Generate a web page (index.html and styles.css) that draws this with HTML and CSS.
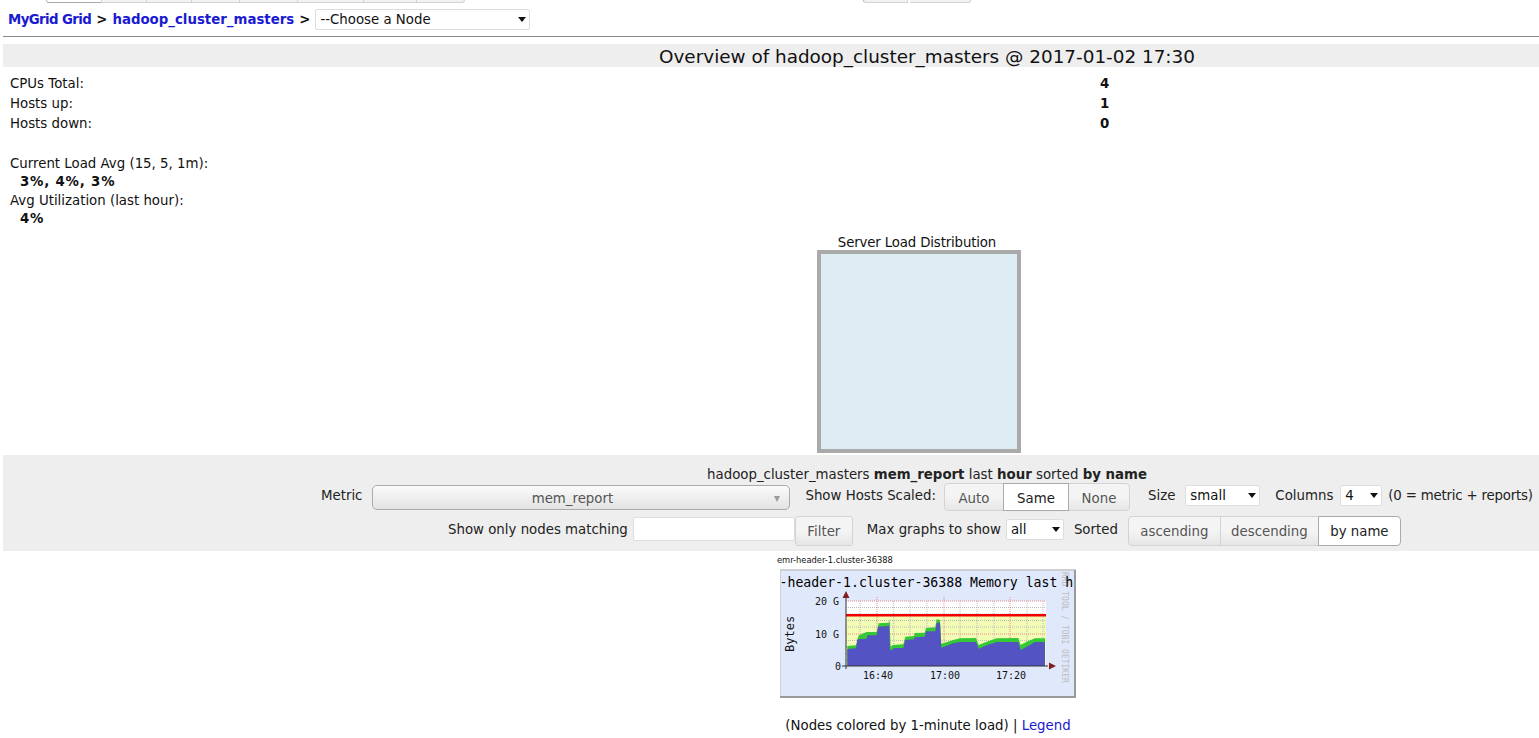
FILE: index.html
```html
<!DOCTYPE html>
<html lang="en">

<head>
    <meta charset="UTF-8">
    <meta name="viewport" content="width=device-width, initial-scale=1.0">
    <title>MyGrid Grid Report</title>
    <link rel="stylesheet" href="styles.css">
</head>

<body>
    <div class="tabstrip">
        <div class="tabs tabs-left">
            <a class="tab tab-on tab-first"></a>
            <a class="tab t45"></a>
            <a class="tab t45"></a>
            <a class="tab t48"></a>
            <a class="tab t58"></a>
            <a class="tab t66"></a>
            <a class="tab t53"></a>
            <a class="tab t48 tab-last"></a>
        </div>
        <div class="tabs tabs-right">
            <a class="tab t44 tab-first"></a>
            <a class="tab t61 tab-last"></a>
        </div>
    </div>

    <div class="crumbs">
        <a class="crumb-root" href="#">MyGrid Grid</a> <b>&gt;</b> <a href="#">hadoop_cluster_masters</a> <b>&gt;</b>
        <span class="sel sel-node">
            <select>
                <option>--Choose a Node</option>
            </select>
        </span>
    </div>
    <hr class="rule">

    <div class="page">
        <h1 class="overview">Overview of hadoop_cluster_masters @ 2017-01-02 17:30</h1>

        <div class="stat-row"><span>CPUs Total:</span><b>4</b></div>
        <div class="stat-row"><span>Hosts up:</span><b>1</b></div>
        <div class="stat-row"><span>Hosts down:</span><b>0</b></div>

        <div class="load">
            <div>Current Load Avg (15, 5, 1m):</div>
            <div class="load-val">3%, 4%, 3%</div>
            <div class="load-gap">Avg Utilization (last hour):</div>
            <div class="load-val">4%</div>
        </div>

        <div class="pie">
            <div class="pie-title">Server Load Distribution</div>
            <div class="pie-box"></div>
        </div>

        <div class="controls">
            <div class="ctl-title">hadoop_cluster_masters <b>mem_report</b> last <b>hour</b> sorted <b>by name</b></div>
            <div class="ctl-row">
                <span>Metric</span>
                <span class="combo ml10">mem_report</span>
                <span class="ml15">Show Hosts Scaled:</span>
                <span class="btns ml8">
                    <a class="btn w60">Auto</a><a class="btn btn-on w65">Same</a><a class="btn w61">None</a>
                </span>
                <span class="ml18">Size</span>
                <span class="sel sel-size ml10"><select><option>small</option></select></span>
                <span class="ml15">Columns</span>
                <span class="sel sel-cols ml7"><select><option>4</option></select></span>
                <span class="cols-note ml6">(0 = metric + reports)</span>
            </div>
            <div class="ctl-row ctl-row2">
                <span>Show only nodes matching</span>
                <input class="filter-input ml5" type="text">
                <a class="btn btn-alone w58">Filter</a>
                <span class="ml14">Max graphs to show</span>
                <span class="sel sel-max ml5"><select><option>all</option></select></span>
                <span class="ml10">Sorted</span>
                <span class="btns ml10">
                    <a class="btn w92">ascending</a><a class="btn w98">descending</a><a class="btn btn-on w83">by name</a>
                </span>
            </div>
        </div>

        <div class="graph">
            <div class="graph-name">emr-header-1.cluster-36388</div>
            <svg class="graph-img" width="296" height="129" viewBox="0 0 296 129">
                <rect x="0" y="0" width="296" height="129" fill="#e0e9fb" />
                <path d="M0 128.5V1H295" fill="none" stroke="#cfcfcf" stroke-width="2" />
                <path d="M0 128H295V1" fill="none" stroke="#9a9a9a" stroke-width="2" />

                <rect x="66" y="32" width="200" height="65" fill="#fff" />
                <rect x="66" y="46" width="200" height="51" fill="#f3fcb4" />

                <path class="grid-minor" d="M80 32V97M113.700 32V97M130 32V97M147 32V97M180 32V97M197 32V97M214 32V97M247 32V97M263 32V97M66 38.500H266M66 45H266M66 51.500H266M66 58H266M66 71.500H266M66 78H266M66 84.500H266M66 91H266" />
                <path class="grid-major" d="M97 28V97M164 28V97M230 28V97M66 32H266M66 65H266" />

                <path d="M67.300 97V77L76 76.300L78.700 66.300L86.700 63H96.700L98.700 54.300L108.700 53.700L109.300 50L110.700 77.700L112.700 76L123.300 75.300L125.300 67.700L134 67L134.700 64L144.700 63.700L146 59L155.300 58.300L156.700 50.300L160 51L161.300 74.700L173.300 71L180 69.300L196 69L198.700 76L206.700 72.700L216.700 69.300L238.300 69L240.700 76L246.700 72.700L255 69.300H265V97Z" fill="#34c934" />
                <path d="M67.300 97V80L76 79.300L77.300 70.300L86.700 69.700L87.300 66.300H96.700L98 57.700L108.700 57L109.300 52L110 81L112 81L114 79H123.300L125.300 71L134 70.300L134.700 68.300L144.700 67.700L146 62.300H155.300L156.700 53.700H160L161.300 78.700L173.300 74.300L180 73H196L198.700 79.700L206.700 76.300L216.700 73H238.300L240.700 81L246.700 77.700L255 73H265V97Z" fill="#5353c4" />

                <rect x="66" y="45" width="200" height="2.500" fill="#f00000" />

                <path d="M62 97H268M66 26V100" fill="none" stroke="#333" stroke-width="1" />
                <path d="M66 22L62.500 29H69.500Z M276 97L269 93.500V100.500Z" fill="#7f1f1f" />

                <text class="g-rrd" transform="translate(282 3) rotate(90)">RRD TOOL / TOBI OETIKER</text>
                <text class="g-title" x="-0.5" y="17.500">-header-1.cluster-36388 Memory last h</text>
                <text class="g-label" x="35" y="35.500">20 G</text>
                <text class="g-label" x="35" y="68.500">10 G</text>
                <text class="g-label" x="55" y="100.500">0</text>
                <text class="g-label" x="83" y="109.500">16:40</text>
                <text class="g-label" x="150" y="109.500">17:00</text>
                <text class="g-label" x="216" y="109.500">17:20</text>
                <text class="g-bytes" transform="translate(14 83) rotate(-90)">Bytes</text>
            </svg>
        </div>

        <div class="foot">(Nodes colored by 1-minute load) | <a href="#">Legend</a></div>
    </div>
</body>

</html>
```

FILE: styles.css
```css
body {
    font-family: "DejaVu Sans", Verdana, sans-serif;
    font-size: 13.33px;
    color: #111;
    background-color: #fff;
    margin: 0;
    padding: 0;
}

a {
    color: #1a1ad0;
    text-decoration: none;
}

.tabstrip {
    height: 3px;
    overflow: hidden;
    display: flex;
}

.tabs {
    display: flex;
    height: 3px;
}

.tabs-left {
    margin-left: 46px;
}

.tabs-right {
    margin-left: 398px;
    gap: 2px;
}

.tab {
    display: block;
    width: 45px;
    height: 2px;
    box-sizing: content-box;
    background-color: #f2f2f2;
    border: 1px solid #d3d3d3;
    border-top: none;
    border-left: none;
}

.tab-on {
    width: 54px;
    background-color: #fff;
    border-left: 1px solid #aaa;
    border-bottom-color: #aaa;
}

.tab-first {
    border-left: 1px solid #bbb;
    border-bottom-left-radius: 4px;
}

.tab-last {
    border-bottom-right-radius: 4px;
}

.t44 { width: 43px; }
.t45 { width: 44px; }
.t48 { width: 47px; }
.t53 { width: 52px; }
.t58 { width: 57px; }
.t61 { width: 60px; }
.t66 { width: 65px; }

.crumbs {
    display: flex;
    align-items: center;
    height: 22px;
    margin-top: 5px;
    padding-left: 8px;
    gap: 5px;
    font-weight: bold;
    white-space: nowrap;
}

.crumb-root {
    letter-spacing: -.6px;
}

.sel {
    position: relative;
    display: inline-block;
}

.sel select {
    appearance: none;
    display: block;
    width: 100%;
    height: 100%;
    font-family: "DejaVu Sans", Verdana, sans-serif;
    font-size: 13.33px;
    color: #111;
    background-color: #fff;
    border: 1px solid #ddd;
    border-radius: 2px;
    padding: 0 0 0 4px;
    margin: 0;
}

.sel::after {
    content: "";
    position: absolute;
    right: 4px;
    top: 8px;
    border-left: 4px solid transparent;
    border-right: 4px solid transparent;
    border-top: 5px solid #111;
}

.sel-node {
    width: 215px;
    height: 21px;
    font-weight: normal;
}

.rule {
    height: 1px;
    margin: 6px 0 0 3px;
    border: none;
    background-color: #888;
}

.page {
    padding-left: 3px;
}

.overview {
    margin: 7px 0 7px;
    height: 23px;
    line-height: 25px;
    padding-left: 312px;
    background-color: #eee;
    font-size: 18.4px;
    font-weight: normal;
    text-align: center;
    color: #111;
}

.stat-row {
    display: flex;
    height: 20px;
    line-height: 20px;
    padding-left: 7px;
}

.stat-row span {
    width: 1090px;
}

.load {
    margin-top: 21px;
    padding-left: 7px;
    line-height: 18px;
}

.load-val {
    padding-left: 10px;
    font-weight: bold;
    letter-spacing: .8px;
}

.load-gap {
    margin-top: 1px;
}

.pie {
    width: 204px;
    margin: 6px 0 0 814px;
    text-align: center;
}

.pie-title {
    height: 16px;
    line-height: 18px;
    width: 200px;
    letter-spacing: -.15px;
}

.pie-box {
    box-sizing: border-box;
    width: 204px;
    height: 203px;
    background-color: #deecf4;
    border: 4px solid #aaa;
}

.controls {
    height: 96px;
    margin-top: 2px;
    box-sizing: border-box;
    background-color: #eee;
    padding: 12px 0 0 312px;
    color: #222;
}

.ctl-title {
    text-align: center;
    height: 16px;
    line-height: 16px;
}

.ctl-row {
    display: flex;
    align-items: center;
    height: 28px;
    padding-left: 6px;
    white-space: nowrap;
}

.ctl-row > span {
    margin-bottom: 3px;
}

.ctl-row > .combo,
.ctl-row > .btns {
    margin-bottom: 0;
}

.ctl-row2 {
    height: 30px;
    margin-top: 5px;
    padding-left: 133px;
}

.cols-note {
    letter-spacing: -.2px;
}

.combo {
    box-sizing: border-box;
    position: relative;
    width: 418px;
    height: 25px;
    line-height: 25px;
    padding-right: 18px;
    text-align: center;
    color: #555;
    background: linear-gradient(#fbfbfb, #ececec 60%, #e4e4e4);
    border: 1px solid #aaa;
    border-radius: 5px;
}

.combo::after {
    content: "";
    position: absolute;
    right: 9px;
    top: 10px;
    border-left: 3px solid transparent;
    border-right: 3px solid transparent;
    border-top: 6px solid #999;
}

.btns {
    display: flex;
    height: 100%;
}

.btn {
    box-sizing: border-box;
    display: block;
    height: 100%;
    line-height: 30px;
    text-align: center;
    color: #555;
    background: linear-gradient(#f4f4f4 50%, #e6e6e6);
    border: 1px solid #d3d3d3;
    margin-right: -1px;
}

.btns .btn:first-child {
    border-radius: 4px 0 0 4px;
}

.btns .btn:last-child {
    border-radius: 0 4px 4px 0;
    margin-right: 0;
}

.btn-on {
    position: relative;
    color: #212121;
    background: #fff;
    border-color: #aaa;
}

.btn-alone {
    border-radius: 3px;
    margin-right: 0;
}

.w58 { width: 58px; }
.w60 { width: 60px; }
.w61 { width: 62px; }
.w65 { width: 66px; }
.w83 { width: 83px; }
.w92 { width: 93px; }
.w98 { width: 99px; }

.ctl-row > .ml5 { margin-left: 5px; }
.ctl-row > .ml6 { margin-left: 6px; }
.ctl-row > .ml7 { margin-left: 7px; }
.ctl-row > .ml8 { margin-left: 8px; }
.ctl-row > .ml10 { margin-left: 10px; }
.ctl-row > .ml11 { margin-left: 11px; }
.ctl-row > .ml14 { margin-left: 14px; }
.ctl-row > .ml15 { margin-left: 15px; }
.ctl-row > .ml18 { margin-left: 18px; }

.sel-size {
    width: 75px;
    height: 21px;
}

.sel-cols {
    width: 42px;
    height: 21px;
}

.sel-max {
    width: 58px;
    height: 21px;
}

.filter-input {
    box-sizing: border-box;
    width: 162px;
    height: 24px;
    padding: 0 4px;
    border: 1px solid #ddd;
    border-radius: 2px;
    background-color: #fff;
    margin-top: 0;
    margin-right: 0;
    margin-bottom: 5px;
}

.graph {
    width: 300px;
    margin: 0 0 0 774px;
}

.graph-name {
    height: 18px;
    line-height: 18px;
    font-size: 8.3px;
    color: #111;
}

.graph-img {
    display: block;
    margin-left: 3px;
}

.grid-minor {
    fill: none;
    stroke: #bbb;
    stroke-width: 1;
    stroke-dasharray: 1 1;
}

.grid-major {
    fill: none;
    stroke: #e88;
    stroke-width: 1;
    stroke-dasharray: 1 1;
}

.g-title {
    font-family: "DejaVu Sans Mono", monospace;
    font-size: 13.2px;
    fill: #000;
}

.g-label {
    font-family: "DejaVu Sans Mono", monospace;
    font-size: 10px;
    fill: #111;
}

.g-bytes {
    font-family: "DejaVu Sans Mono", monospace;
    font-size: 12px;
    fill: #111;
}

.g-rrd {
    font-family: "DejaVu Sans Mono", monospace;
    font-size: 8px;
    fill: #bbb;
}

.foot {
    margin-top: 20px;
    text-align: center;
    height: 16px;
    line-height: 16px;
    padding-left: 314px;
}
```
